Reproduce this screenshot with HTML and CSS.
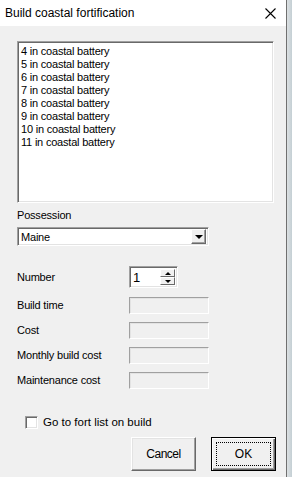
FILE: index.html
```html
<!DOCTYPE html>
<html lang="en">
<head>
  <meta charset="UTF-8">
  <title>Build coastal fortification</title>
  <link rel="stylesheet" href="styles.css">
</head>
<body>
  <div class="screen">
    <div class="dialog">
      <!-- Barra de título -->
      <div class="titlebar">
        <span class="title">Build coastal fortification</span>
        <svg class="close" width="11" height="11" viewBox="0 0 11 11">
          <path d="M0.5 0.5 L10.5 10.5 M10.5 0.5 L0.5 10.5" stroke="#000" stroke-width="1.1" fill="none"/>
        </svg>
      </div>

      <div class="body">
        <!-- Lista de baterías -->
        <div class="listbox">
          <div class="item">4 in coastal battery</div>
          <div class="item">5 in coastal battery</div>
          <div class="item">6 in coastal battery</div>
          <div class="item">7 in coastal battery</div>
          <div class="item">8 in coastal battery</div>
          <div class="item">9 in coastal battery</div>
          <div class="item">10 in coastal battery</div>
          <div class="item">11 in coastal battery</div>
        </div>

        <div class="label possession">Possession</div>
        <div class="combo">
          <span class="combo-text">Maine</span>
          <span class="combo-btn"><span class="arrow-down"></span></span>
        </div>

        <div class="row number-row">
          <span class="label">Number</span>
          <div class="spinner">
            <span class="spin-text">1</span>
            <span class="spin-btns">
              <span class="spin-btn"><span class="arrow-up"></span></span>
              <span class="spin-btn"><span class="arrow-down small"></span></span>
            </span>
          </div>
        </div>

        <div class="row field-row">
          <span class="label">Build time</span>
          <span class="field"></span>
        </div>
        <div class="row field-row">
          <span class="label">Cost</span>
          <span class="field"></span>
        </div>
        <div class="row field-row">
          <span class="label">Monthly build cost</span>
          <span class="field"></span>
        </div>
        <div class="row field-row">
          <span class="label">Maintenance cost</span>
          <span class="field"></span>
        </div>

        <div class="check-row">
          <span class="checkbox"></span>
          <span class="label">Go to fort list on build</span>
        </div>

        <div class="buttons">
          <button class="btn">Cancel</button>
          <button class="btn default"><span class="focus">OK</span></button>
        </div>
      </div>
    </div>
    <div class="backdrop"></div>
  </div>
</body>
</html>
```

FILE: styles.css
```css
* {
  box-sizing: border-box;
}

body {
  margin: 0;
  padding: 0;
  overflow: hidden;
  font-family: 'Liberation Sans', Arial, sans-serif;
  font-size: 11px;
  color: #000;
}

.screen {
  display: flex;
  height: 477px;
}

.dialog {
  width: 287px;
  height: 477px;
  background: #f0f0f0;
  border-right: 1px solid #707070;
  display: flex;
  flex-direction: column;
}

.backdrop {
  flex: 1;
  background: linear-gradient(to right, #dde1e3, #c4cfd4);
}

/* Barra de título */
.titlebar {
  height: 26px;
  background: #fff;
  display: flex;
  align-items: center;
  justify-content: space-between;
  padding: 0 10px 0 5px;
}

.title {
  font-family: 'Liberation Sans', Arial, sans-serif;
  font-size: 12px;
  margin-top: -1px;
}

.close {
  margin-top: 1px;
}

.body {
  padding: 15px 0 0 17px;
  display: flex;
  flex-direction: column;
}

.label {
  letter-spacing: -0.2px;
  line-height: 13px;
}

/* Lista */
.listbox {
  width: 257px;
  height: 162px;
  background: #fff;
  border: 1px solid;
  border-color: #a0a0a0 #fff #fff #a0a0a0;
  box-shadow: inset 1px 1px #696969, inset -1px -1px #e3e3e3;
  padding: 3px 3px;
}

.item {
  line-height: 13px;
  letter-spacing: -0.2px;
}

.possession {
  margin-top: 6px;
}

/* Combo */
.combo {
  margin-top: 5px;
  width: 192px;
  height: 19px;
  background: #fff;
  border: 1px solid;
  border-color: #a0a0a0 #fff #fff #a0a0a0;
  box-shadow: inset 1px 1px #696969, inset -1px -1px #e3e3e3;
  display: flex;
  align-items: center;
  justify-content: space-between;
  padding: 1px 2px 1px 3px;
  letter-spacing: -0.2px;
}

.combo-btn {
  width: 15px;
  height: 15px;
  background: #f0f0f0;
  border: 1px solid;
  border-color: #fff #696969 #696969 #fff;
  box-shadow: inset -1px -1px #a0a0a0;
  display: flex;
  align-items: center;
  justify-content: center;
}

.arrow-down {
  width: 0;
  height: 0;
  border-left: 4px solid transparent;
  border-right: 4px solid transparent;
  border-top: 4px solid #000;
  margin-left: 1px;
}

.arrow-down.small,
.arrow-up {
  border-left-width: 3px;
  border-right-width: 3px;
  margin-left: 0;
}

.arrow-down.small {
  border-top-width: 3px;
}

.arrow-up {
  width: 0;
  height: 0;
  border-left: 3px solid transparent;
  border-right: 3px solid transparent;
  border-bottom: 3px solid #000;
}

/* Filas */
.row {
  display: flex;
  align-items: center;
}

.row .label {
  width: 112px;
}

.number-row {
  margin-top: 20px;
}

.spinner {
  width: 49px;
  height: 22px;
  background: #fff;
  border: 1px solid;
  border-color: #a0a0a0 #fff #fff #a0a0a0;
  box-shadow: inset 1px 1px #696969, inset -1px -1px #e3e3e3;
  display: flex;
  justify-content: space-between;
  padding: 2px 2px 2px 3px;
  font-size: 13px;
}

.spin-text {
  line-height: 17px;
}

.spin-btns {
  display: flex;
  flex-direction: column;
  width: 15px;
}

.spin-btn {
  flex: 1;
  background: #f0f0f0;
  border: 1px solid;
  border-color: #fff #696969 #696969 #fff;
  display: flex;
  align-items: center;
  justify-content: center;
}

.field-row {
  margin-top: 8px;
}

.number-row + .field-row {
  margin-top: 9px;
}

.field {
  width: 80px;
  height: 17px;
  border: 1px solid;
  border-color: #a0a0a0 #fff #fff #a0a0a0;
  box-shadow: inset 1px 1px #e3e3e3;
}

/* Casilla */
.check-row {
  margin-top: 27px;
  margin-left: 8px;
  display: flex;
  align-items: center;
  gap: 5px;
  font-size: 11.5px;
}

.check-row .label {
  letter-spacing: 0;
}

.checkbox {
  width: 13px;
  height: 13px;
  background: #fff;
  border: 1px solid;
  border-color: #a0a0a0 #fff #fff #a0a0a0;
  box-shadow: inset 1px 1px #696969, inset -1px -1px #e3e3e3;
}

/* Botones */
.buttons {
  margin-top: 8px;
  margin-left: 114px;
  display: flex;
  gap: 15px;
}

.btn {
  width: 65px;
  height: 34px;
  padding: 0;
  font-family: 'Liberation Sans', Arial, sans-serif;
  font-size: 12px;
  letter-spacing: -0.5px;
  color: #000;
  background: #f0f0f0;
  border: 1px solid;
  border-color: #fff #696969 #696969 #fff;
  box-shadow: inset -1px -1px #a0a0a0, inset 1px 1px #e3e3e3;
}

.btn.default {
  border: 1px solid #000;
  box-shadow: inset 1px 1px #fff, inset -1px -1px #696969, inset -2px -2px #a0a0a0;
  padding: 4px;
  display: flex;
  letter-spacing: 0;
}

.focus {
  flex: 1;
  border: 1px dotted #000;
  display: flex;
  align-items: center;
  justify-content: center;
}
```
